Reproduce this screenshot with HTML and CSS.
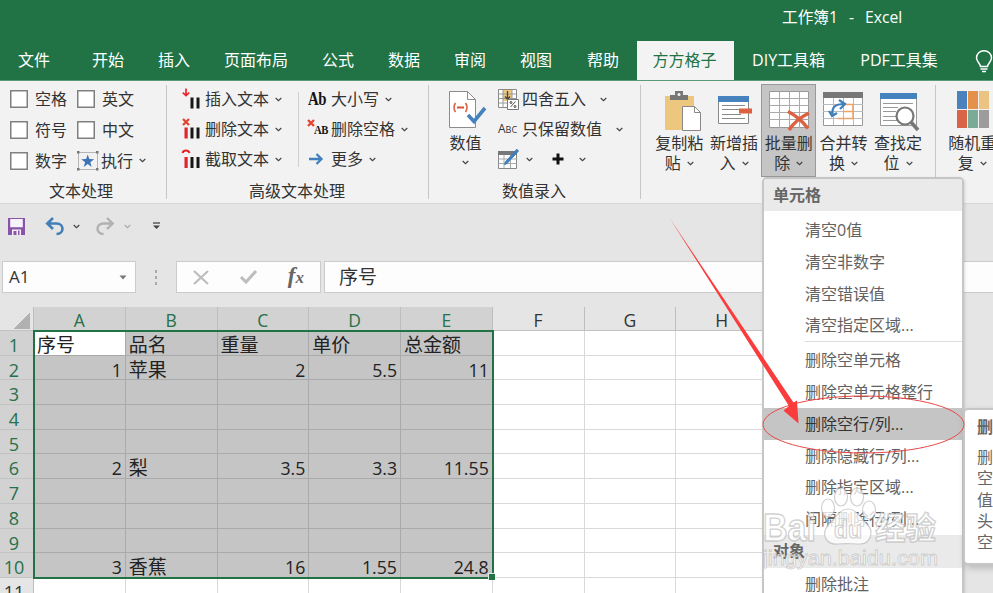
FILE: index.html
```html
<!DOCTYPE html>
<html lang="zh-CN">
<head>
<meta charset="utf-8">
<title>工作簿1 - Excel</title>
<link rel="stylesheet" href="styles.css">
</head>
<body>
<svg class="defs" width="0" height="0">
  <symbol id="chev" viewBox="0 0 7 5"><path d="M.7 1 3.500 3.700 6.300 1" fill="none" stroke="currentColor" stroke-width="1.200"/></symbol>
</svg>
<div class="app">
  <header class="title"><span>工作簿1</span><span>-</span><span>Excel</span></header>
  <nav class="tabs">
    <span class="tab file">文件</span><span class="tab">开始</span><span class="tab">插入</span><span class="tab">页面布局</span><span class="tab">公式</span><span class="tab">数据</span><span class="tab">审阅</span><span class="tab">视图</span><span class="tab help">帮助</span><span class="tab active">方方格子</span><span class="tab diy">DIY工具箱</span><span class="tab pdf">PDF工具集</span>
    <svg class="bulb" width="18" height="24" viewBox="0 0 18 24" fill="none" stroke="#fff" stroke-width="1.500"><path d="M5.500 16.500c0-3-4-4.500-4-8.800a7.500 7 0 0 1 15 0c0 4.300-4 5.800-4 8.800zM5.500 19h7M7 21.500h4"/></svg>
  </nav>

  <section class="ribbon">
    <div class="group g1">
      <div class="checks">
        <label><i class="box"></i>空格</label><label><i class="box"></i>英文</label>
        <label><i class="box"></i>符号</label><label><i class="box"></i>中文</label>
        <label><i class="box"></i>数字</label>
        <label class="exec"><svg width="22" height="20" viewBox="0 0 22 20"><path d="M2 1.500h18M2 18.500h18M1.500 2v16M20.500 2v16" stroke="#b5b5b5" fill="none"/><path d="M0 0h2.500v2.500H0zM19 0h2.500v2.500H19zM0 17h2.500v2.500H0zM19 17h2.500v2.500H19z" fill="#777"/><path d="m10.700 3.500 1.600 4.600 4.900.1-3.900 3 1.400 4.700-4-2.800-4 2.800 1.400-4.700-3.900-3 4.900-.1z" fill="#3e74b4"/></svg>执行<svg class="chev"><use href="#chev"/></svg></label>
      </div>
      <div class="caption">文本处理</div>
    </div>
    <div class="group g2">
      <div class="cols">
        <div class="list left">
          <div><svg width="22" height="24" viewBox="0 0 22 24"><path d="M5 1.500v7M1.800 5.700 5 8.700l3.200-3" stroke="#f2222b" stroke-width="1.700" fill="none"/><path d="M9.500 10.500h3v11h-3zM15.500 10.500h3v11h-3z" fill="#171717"/></svg>插入文本<svg class="chev"><use href="#chev"/></svg></div>
          <div><svg width="22" height="24" viewBox="0 0 22 24"><path d="m2 2 6 6m0-6L2 8" stroke="#e44432" stroke-width="2.300"/><path d="M3.500 10.500h3.200v11H3.500z" fill="#e3232a"/><path d="M9.500 10.500h3v11h-3zM15.500 10.500h3v11h-3z" fill="#171717"/></svg>删除文本<svg class="chev"><use href="#chev"/></svg></div>
          <div><svg width="22" height="24" viewBox="0 0 22 24"><path d="M1.500 6c1-3.400 6-3.400 7 0" stroke="#e3232a" stroke-width="2" fill="none"/><path d="M3.500 10h3.200v11H3.500z" fill="#e3232a"/><path d="M9.500 10h3v11h-3zM15.500 10h3v11h-3z" fill="#171717"/></svg>截取文本<svg class="chev"><use href="#chev"/></svg></div>
        </div>
        <div class="list right">
          <div><b class="ab">Ab</b>大小写<svg class="chev"><use href="#chev"/></svg></div>
          <div><svg class="xicon" width="9" height="9" viewBox="0 0 9 9"><path d="m1 1 6 6m0-6L1 7" stroke="#e44432" stroke-width="2.300"/></svg><b class="ab caps">AB</b>删除空格<svg class="chev"><use href="#chev"/></svg></div>
          <div><svg class="arrow" width="15" height="12" viewBox="0 0 15 12"><path d="M0 6h12M7.500 1l5 5-5 5" stroke="#4080bd" stroke-width="2.300" fill="none"/></svg>更多<svg class="chev"><use href="#chev"/></svg></div>
        </div>
      </div>
      <div class="caption">高级文本处理</div>
    </div>
    <div class="group g3">
      <div class="cols">
        <div class="number">
          <svg width="38" height="40" viewBox="0 0 38 40"><path d="M1.500 1.500h18l8 8v28h-26z" fill="#fff" stroke="#8c8c8c"/><path d="M19.500 1.500v8h8" fill="none" stroke="#8c8c8c"/><path d="M7.500 13q-3 4.500 0 9M17.500 13q3 4.500 0 9" stroke="#df6142" stroke-width="1.700" fill="none"/><path d="M9 17.500h7" stroke="#d95235" stroke-width="2"/><path d="m20 25 6 6.500L37 18" fill="none" stroke="#4482bd" stroke-width="3.600"/></svg>
          <span>数值</span><svg class="chev"><use href="#chev"/></svg>
        </div>
        <div class="list">
          <div><svg width="21" height="22" viewBox="0 0 21 22"><path d="M.5 1.500h18v18H.5z" fill="#fff" stroke="#888"/><path d="M5 2h9v11H5z" fill="#f0c77d"/><path d="M.5 6h18M.5 10.500h18M.5 15h18M5 1.500v18M14 1.500v18" stroke="#999" fill="none"/><path d="M9.500 3v8M7 8.500l2.500 2.700L12 8.500" stroke="#444" stroke-width="1.300" fill="none"/><path d="M9.500 11.500h11v10h-11z" fill="#fff" stroke="#777"/><path d="m12.500 19 5-5.500" stroke="#555"/><circle cx="13" cy="14.500" r="1" fill="none" stroke="#444"/><circle cx="17" cy="18.500" r="1" fill="none" stroke="#444"/></svg><span class="four">四舍五入</span><svg class="chev far"><use href="#chev"/></svg></div>
          <div><span class="abc">A<small>BC</small></span><span>只保留数值</span><svg class="chev far"><use href="#chev"/></svg></div>
          <div><svg width="21" height="21" viewBox="0 0 21 21"><path d="M.5 3.500h18v16H.5z" fill="#fff" stroke="#888"/><path d="M0 2h19v4H0z" fill="#777"/><path d="M.5 10h18M.5 14.500h18M6 6v13M12.500 6v13" stroke="#aaa" fill="none"/><path d="m6.500 15.500 2.400-.8L20.500 2 18.800.2 7.300 13z" fill="#427fba" stroke="#427fba"/></svg><svg class="chev c1"><use href="#chev"/></svg><svg class="plus" width="12" height="12" viewBox="0 0 12 12"><path d="M6 .5v11M.5 6h11" stroke="#111" stroke-width="3"/></svg><svg class="chev c2"><use href="#chev"/></svg></div>
        </div>
      </div>
      <div class="caption">数值录入</div>
    </div>
    <div class="group g4">
      <div class="big"><svg width="40" height="42" viewBox="0 0 40 42"><path d="M6 5h29v34H6z" fill="#eec77e"/><path d="M11 4h5V0h8v4h5v5H11z" fill="#777"/><circle cx="20" cy="3.500" r="1.500" fill="#f2f2f2"/><path d="M23.500 15.500h12l6 6v18h-18z" fill="#fff" stroke="#888"/><path d="M35.500 15.500v6h6" fill="none" stroke="#888"/></svg><span>复制粘</span><span>贴<svg class="chev"><use href="#chev"/></svg></span></div>
      <div class="big"><svg width="40" height="42" viewBox="0 0 40 42"><path d="M4.500 6.500h30v26h-30z" fill="#fff" stroke="#888"/><path d="M4 5h31v6H4z" fill="#4682bd"/><path d="M8 14.500h23M8 18.500h19M8 23.500h19M8 27.500h23" stroke="#8a8a8a"/><path d="M25 17.500h13v5H25z" fill="#dc6042"/></svg><span>新增插</span><span>入<svg class="chev"><use href="#chev"/></svg></span></div>
      <div class="big pressed"><svg width="42" height="42" viewBox="0 0 42 42"><path d="M1.500.5h39v36h-39z" fill="#fff" stroke="#999"/><path d="M1 7.500h40M1 14.500h40M1 21.500h40M1 28.500h40M11.500 1v36M21.500 1v36M31.500 1v36" stroke="#aaa"/><path d="M20 20.500c8 4 14 9 20 17M41 22c-8 4-15 9-20 17" fill="none" stroke="#dc6042" stroke-width="3.500"/></svg><span>批量删</span><span>除<svg class="chev"><use href="#chev"/></svg></span></div>
      <div class="big"><svg width="40" height="42" viewBox="0 0 40 42"><path d="M.5 2.500h39v32H.5z" fill="#fff" stroke="#999"/><path d="M0 1h40v6H0z" fill="#777"/><path d="M0 13.500h40M0 20.500h40M0 27.500h40M10.500 7v27M20.500 7v27M30.500 7v27" stroke="#bbb"/><path d="M20 13.500h10v14H15M20 20.500h10" fill="none" stroke="#eda366" stroke-width="1.500"/><path d="M9 24c0-8 3-11 12-11M16 9l6 4-5 5M6 20l3 5 5-3" fill="none" stroke="#417fbb" stroke-width="2.200"/></svg><span>合并转</span><span>换<svg class="chev"><use href="#chev"/></svg></span></div>
      <div class="big"><svg width="40" height="42" viewBox="0 0 40 42"><path d="M2.500 3.500h36v31h-36z" fill="#fff" stroke="#999"/><path d="M2 2h37v6H2z" fill="#4682bd"/><path d="M5 12.500h30M5 16.500h15M5 20.500h13M5 25.500h13M5 29.500h16" stroke="#999"/><circle cx="27" cy="25" r="8.500" fill="#fff" stroke="#777" stroke-width="2.200"/><path d="m33 31 7 8" stroke="#777" stroke-width="3.500"/></svg><span>查找定</span><span>位<svg class="chev"><use href="#chev"/></svg></span></div>
    </div>
    <div class="group g5">
      <div class="big"><svg width="34" height="42" viewBox="0 0 34 42"><path d="M2 0h10v18H2z" fill="#4b82bd"/><path d="M13 0h10v18H13z" fill="#e69149"/><path d="M24 0h10v18H24z" fill="#ebc382"/><path d="M2 19h10v18H2z" fill="#d96447"/><path d="M13 19h10v18H13z" fill="#7aab97"/><path d="M24 19h10v18H24z" fill="#9c9c9c"/></svg><span>随机重</span><span>复<svg class="chev"><use href="#chev"/></svg></span></div>
    </div>
  </section>

  <div class="quick">
    <svg width="17" height="17" viewBox="0 0 17 17"><path d="M0 0h17v17H0z" fill="#8953a9"/><path d="M2.200 1h12.600v8.300H2.200zM4 11.500h9V17H4z" fill="#f7f3fa"/><path d="M5.500 13h3v4h-3zM10 12.500h1.500V17H10z" fill="#8953a9"/></svg>
    <svg class="undo" width="20" height="19" viewBox="0 0 20 19"><path d="M2.500 6.500h9c8 0 8 10.500 0 10.500M8 1 2.300 6.500 8 12" fill="none" stroke="#437eb8" stroke-width="2.600"/></svg>
    <svg class="chev q1"><use href="#chev"/></svg>
    <svg class="redo" width="20" height="19" viewBox="0 0 20 19"><path d="M17.500 6.500h-9c-8 0-8 10.500 0 10.500M12 1l5.700 5.500L12 12" fill="none" stroke="#b1b1b1" stroke-width="2.400"/></svg>
    <svg class="chev q2"><use href="#chev"/></svg>
    <svg class="more" width="7" height="8" viewBox="0 0 7 8"><path d="M0 1h7" stroke="#444" stroke-width="1.300"/><path d="M0 3.500h7L3.500 7z" fill="#444"/></svg>
  </div>

  <div class="formula">
    <div class="name">A1<svg width="8" height="5" viewBox="0 0 8 5"><path d="M.5.500h7L4 4.500z" fill="#777"/></svg></div>
    <div class="dots"><i></i><i></i><i></i></div>
    <div class="fx">
      <svg width="16" height="15" viewBox="0 0 16 15"><path d="m1 1 14 13M15 1 1 14" stroke="#bdbdbd" stroke-width="2.200"/></svg>
      <svg width="17" height="14" viewBox="0 0 17 14"><path d="m1 7 5 5L16 1" fill="none" stroke="#bdbdbd" stroke-width="3"/></svg>
      <span><i>f</i><em>x</em></span>
    </div>
    <div class="value">序号</div>
  </div>

  <div class="sheet">
    <div class="row heads"><b class="corner"></b><b class="sel">A</b><b class="sel">B</b><b class="sel">C</b><b class="sel">D</b><b class="sel">E</b><b>F</b><b>G</b><b>H</b><b></b><b></b></div>
    <div class="row"><b class="sel">1</b><i class="s cur">序号</i><i class="s">品名</i><i class="s">重量</i><i class="s">单价</i><i class="s">总金额</i><i></i><i></i><i></i><i></i><i></i></div>
    <div class="row"><b class="sel">2</b><i class="s n">1</i><i class="s">苹果</i><i class="s n">2</i><i class="s n">5.5</i><i class="s n">11</i><i></i><i></i><i></i><i></i><i></i></div>
    <div class="row"><b class="sel">3</b><i class="s"></i><i class="s"></i><i class="s"></i><i class="s"></i><i class="s"></i><i></i><i></i><i></i><i></i><i></i></div>
    <div class="row"><b class="sel">4</b><i class="s"></i><i class="s"></i><i class="s"></i><i class="s"></i><i class="s"></i><i></i><i></i><i></i><i></i><i></i></div>
    <div class="row"><b class="sel">5</b><i class="s"></i><i class="s"></i><i class="s"></i><i class="s"></i><i class="s"></i><i></i><i></i><i></i><i></i><i></i></div>
    <div class="row"><b class="sel">6</b><i class="s n">2</i><i class="s">梨</i><i class="s n">3.5</i><i class="s n">3.3</i><i class="s n">11.55</i><i></i><i></i><i></i><i></i><i></i></div>
    <div class="row"><b class="sel">7</b><i class="s"></i><i class="s"></i><i class="s"></i><i class="s"></i><i class="s"></i><i></i><i></i><i></i><i></i><i></i></div>
    <div class="row"><b class="sel">8</b><i class="s"></i><i class="s"></i><i class="s"></i><i class="s"></i><i class="s"></i><i></i><i></i><i></i><i></i><i></i></div>
    <div class="row"><b class="sel">9</b><i class="s"></i><i class="s"></i><i class="s"></i><i class="s"></i><i class="s"></i><i></i><i></i><i></i><i></i><i></i></div>
    <div class="row"><b class="sel">10</b><i class="s n">3</i><i class="s">香蕉</i><i class="s n">16</i><i class="s n">1.55</i><i class="s n">24.8</i><i></i><i></i><i></i><i></i><i></i></div>
    <div class="row"><b>11</b><i></i><i></i><i></i><i></i><i></i><i></i><i></i><i></i><i></i><i></i></div>
    <div class="selection"></div>
  </div>

  <div class="menu">
    <div class="mhead">单元格</div>
    <div class="item">清空0值</div><div class="item">清空非数字</div><div class="item">清空错误值</div><div class="item">清空指定区域...</div>
    <div class="rule"></div>
    <div class="item">删除空单元格</div><div class="item">删除空单元格整行</div><div class="item hot">删除空行/列...</div><div class="item">删除隐藏行/列...</div><div class="item">删除指定区域...</div><div class="item">间隔删除行/列...</div>
    <div class="mhead second">对象</div>
    <div class="item">删除批注</div>
  </div>
  <div class="tip"><b>删</b><p>删<br>空<br>值<br>头<br>空</p></div>

  <svg class="overlay" width="993" height="593" viewBox="0 0 993 593">
    <g class="mark">
      <ellipse cx="828" cy="508" rx="6.500" ry="9"/><ellipse cx="841" cy="497" rx="6.500" ry="9"/><ellipse cx="857" cy="497" rx="6.500" ry="9"/><ellipse cx="869" cy="510" rx="6.500" ry="9"/>
      <path d="M848 509c9 0 12 9 19 15 8 8 3 20-7 20-8 0-14-1-22 0-12 1-18-10-9-20 7-6 10-15 19-15z"/>
      <text class="thick" x="763" y="541" font-size="38" textLength="53" lengthAdjust="spacingAndGlyphs">Bai</text>
      <text x="834" y="538" font-size="24" textLength="28" lengthAdjust="spacingAndGlyphs">du</text>
      <text class="thick" x="875" y="539" font-size="31" textLength="61" lengthAdjust="spacingAndGlyphs">经验</text>
      <text class="url" x="763" y="565" font-size="20" textLength="175" lengthAdjust="spacingAndGlyphs">jingyan.baidu.com</text>
    </g>
    <ellipse cx="863.500" cy="424.500" rx="100.500" ry="28.500" fill="none" stroke="#e84848"/>
    <path d="M669.500 218 789 406l-5.500 4.500 15 13-1.500-23-3.500 2z" fill="#fb3c3c"/>
  </svg>
</div>
</body>
</html>
```
FILE: styles.css
```css
* { box-sizing: border-box; }
body { margin: 0; overflow: hidden; font: 16px/20px "Open Sans", "Noto Sans CJK SC", sans-serif; color: #333; }
.defs { position: absolute; }
svg { flex: none; overflow: visible; }
.app { position: relative; width: 993px; height: 593px; overflow: hidden; background: #e5e5e5; }
.title { height: 41px; padding: 7px 0 0 782px; background: #217346; color: #fff; display: flex; gap: 11px; font-size: 15.700px; white-space: pre; }
.tabs { height: 39px; background: #217346; color: #fff; display: flex; }
.tab { padding: 0 17px; line-height: 38px; white-space: nowrap; text-align: center; }
.tab.file { width: 75px; padding: 0 0 0 18px; text-align: left; }
.tab.help { width: 68px; }
.tab.active { width: 97px; padding: 0 2px 0 0; background: #f3f3f3; color: #217346; }
.tab.diy { width: 109px; padding: 0; }
.tab.pdf { width: 112px; padding: 0; }
.bulb { margin: 9px 0 0 20px; }
.ribbon { height: 124px; background: #f2f2f2; border-top: 1px solid #5b9977; border-bottom: 1px solid #d8d8d8; display: flex; }
.group { position: relative; flex: none; height: 122px; padding-top: 3px; }
.group::after { content: ""; position: absolute; right: 0; top: 4px; width: 1px; height: 114px; background: #c6c6c6; }
.g1 { width: 167px; }
.g2 { width: 262px; }
.g3 { width: 212px; }
.g4 { width: 295px; display: flex; padding-left: 11px; }
.g5 { width: 80px; padding-left: 9px; }
.g5::after { display: none; }
.chev { width: 7px; height: 5px; color: #444; margin-left: 6px; }
.caption { text-align: center; line-height: 20px; margin-top: 2px; }
.g1 .caption { padding-right: 5px; }
.g2 .caption { padding-right: 2px; }
.g3 .caption { padding-right: 2px; }
.checks { height: 95px; padding-left: 10px; display: grid; grid-template-columns: 67px 90px; grid-template-rows: 31px 31px 31px; }
.checks label { display: flex; align-items: center; white-space: nowrap; padding-bottom: 2px; }
.box { width: 18px; height: 18px; background: #fff; border: 1px solid #808080; box-shadow: inset 0 0 0 .5px #808080; margin-right: 7px; }
.exec svg:first-child { margin-right: 2px; }
.cols { display: flex; height: 95px; }
.list > div { height: 30px; display: flex; align-items: center; white-space: nowrap; }
.left { width: 131px; padding-left: 14px; }
.left > div > svg:first-child { margin-right: 2px; }
.g2 .cols { background: linear-gradient(#d0d0d0, #d0d0d0) 131px 8px / 1px 75px no-repeat; }
.right { padding-left: 10px; }
.ab { width: 23px; font: bold 18px "Liberation Serif", serif; letter-spacing: -.5px; color: #151515; transform: scaleX(.82); transform-origin: left; }
.caps { width: 17px; font-size: 13px; letter-spacing: -.5px; margin-top: 2px; }
.xicon { margin: -11px -2px 0 -1px; }
.arrow { margin: 0 7px 0 1px; }
.number { width: 69px; padding: 6px 0 0 4px; display: flex; flex-direction: column; align-items: center; }
.number svg:first-child { margin-left: 2px; }
.number span { margin-top: 3px; }
.number .chev { margin: 7px 0 0; }
.abc { width: 24px; font-size: 12px; }
.abc small { font-size: 9px; }
.four { margin-left: 3px; }
.far { margin-left: 14px; }
.c1 { margin-left: 7px; }
.plus { margin-left: 19px; }
.c2 { margin-left: 15px; }
.big { width: 54.700px; height: 93px; padding-top: 7px; flex: none; display: flex; flex-direction: column; align-items: center; white-space: nowrap; }
.big span { height: 20px; display: flex; align-items: center; }
.pressed { background: #c5c5c5; box-shadow: inset 0 0 0 1px #999; }
.quick { height: 57px; padding: 0 8px 13px; display: flex; align-items: center; }
.undo { margin-left: 20px; }
.q1 { margin-left: 8px; }
.redo { margin-left: 15px; }
.q2 { margin-left: 9px; color: #aaa; }
.more { margin-left: 22px; }
.formula { height: 32px; padding-left: 2px; display: flex; }
.formula > div { border: 1px solid #cbcbcb; background: #fdfdfd; display: flex; align-items: center; }
.formula .name { width: 134px; padding: 0 8px 0 6px; justify-content: space-between; font-size: 17px; }
.formula .dots { width: 40px; border: 0; background: none; flex-direction: column; justify-content: center; gap: 3px; }
.dots i { width: 2px; height: 3px; background: #aaa; }
.fx { width: 145px; padding: 0 16px; justify-content: space-between; }
.fx span { font: italic bold 23px "Liberation Serif", serif; color: #666; line-height: 24px; }
.fx em { font-size: 17px; }
.formula .value { width: 680px; margin-left: 3px; padding-left: 14px; font-size: 19px; }
.formula .dots { flex: none; width: 40px; }
.formula .name, .formula .fx, .formula .value { flex: none; }
.sheet { position: relative; width: 993px; height: 287px; margin-top: 14px; overflow: hidden; }
.row { width: 1000px; display: grid; grid-template-columns: 34px repeat(10, 91.750px); grid-template-rows: 100%; height: 24.700px; }
.row b { font-weight: 400; font-size: 17.500px; line-height: 27px; text-align: center; background: #e5e5e5; border-right: 1px solid #bebebe; border-bottom: 1px solid #c2c2c2; }
.row > b:first-child { padding-right: 5px; font-size: 18px; line-height: 28px; }
.row b.sel { background: #d2d2d2; color: #26704a; }
.row .corner { background: linear-gradient(135deg, transparent 50%, #b1b1b1 50%) 13px 5px / 17px 17px no-repeat #e5e5e5; }
.heads { height: 24px; }
.row i { font-style: normal; font-size: 19px; line-height: 28px; padding: 0 3px; color: #222; background: #fff; border-right: 1px solid #d9d9d9; border-bottom: 1px solid #d9d9d9; white-space: nowrap; }
.row .s { background: #c5c5c5; border-color: #aaa; }
.row .cur { background: #fff; }
.row .n { text-align: right; padding-right: 3px; font-size: 17.700px; }
.selection { position: absolute; left: 33px; top: 23px; width: 461px; height: 249px; border: 2px solid #217346; }
.selection::after { content: ""; position: absolute; right: -3px; bottom: -3px; width: 6px; height: 6px; background: #217346; border: 1px solid #e5e5e5; border-width: 1px 0 0 1px; }
.menu { position: absolute; left: 762px; top: 177px; width: 202px; height: 430px; border: 2px solid #c6c6c6; border-radius: 5px; overflow: hidden; background: #fff; color: #626262; box-shadow: 1px 1px 3px #0002; }
.mhead { height: 32px; padding-left: 9px; line-height: 33px; font-weight: 700; color: #666; background: #eaeaea; }
.item { height: 31.800px; line-height: 32px; padding-left: 41px; white-space: nowrap; }
.mhead + .item { margin-top: 3px; }
.rule { height: 1px; margin: 0 0 2px 41px; background: #ddd; }
.hot { background: #c5c5c5; color: #333; }
.second { height: 33px; line-height: 33px; }
.second + .item { margin-top: 0; }
.tip { position: absolute; left: 963px; top: 408px; width: 60px; height: 157px; border: 2px solid #c6c6c6; border-radius: 5px; background: #fff; padding: 7px 0 0 12px; box-shadow: 2px 3px 7px #0003; color: #666; }
.tip p { margin: 10px 0 0; line-height: 21.300px; }
.overlay { position: absolute; left: 0; top: 0; }
.mark { fill: #fff; fill-opacity: .75; stroke: #aaa; stroke-opacity: .55; stroke-width: 1.200; font-family: "Liberation Sans", "Noto Sans CJK SC", sans-serif; font-weight: 700; }
.thick { stroke-width: 1.400; fill-opacity: .85; }
.url { font-weight: 400; stroke-width: .8; }
```
